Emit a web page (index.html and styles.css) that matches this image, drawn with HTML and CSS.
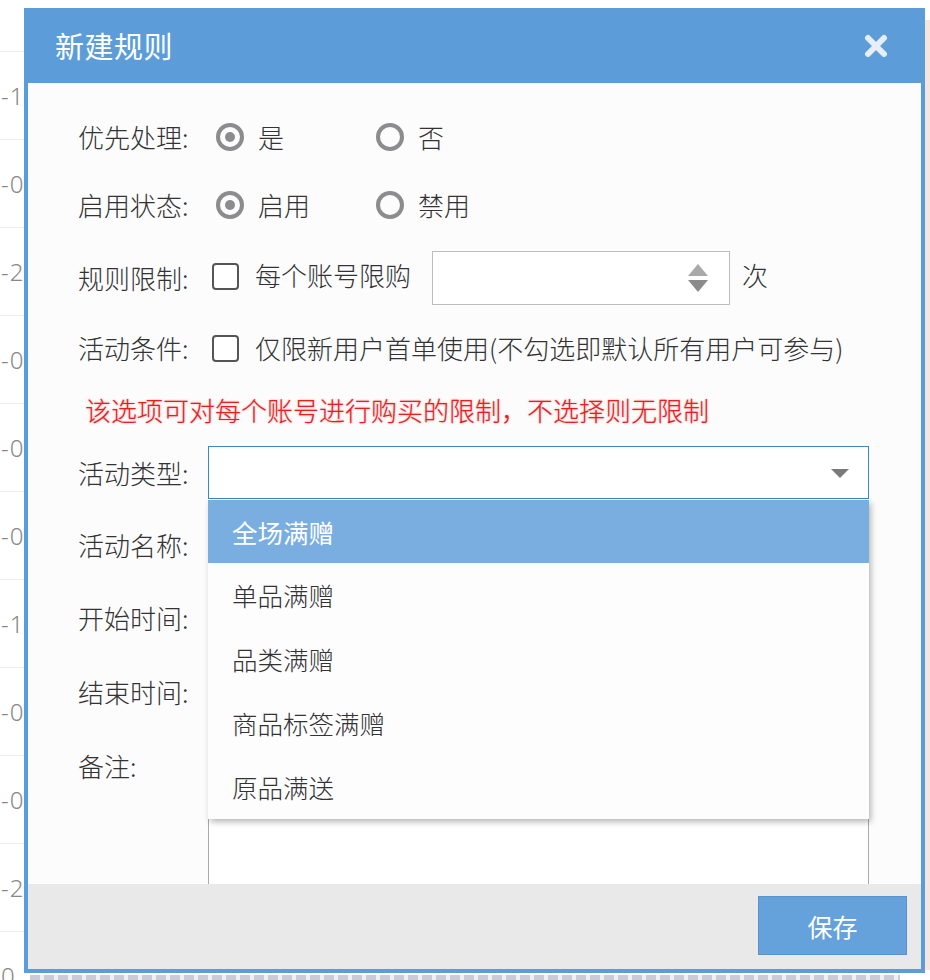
FILE: index.html
```html
<!DOCTYPE html>
<html lang="zh-CN">
<head>
<meta charset="utf-8">
<title>新建规则</title>
<link rel="stylesheet" href="styles.css">
</head>
<body>
<div class="page">
  <div class="bg-table">
    <div class="bg-top"></div>
    <div class="bg-row">-1</div>
    <div class="bg-row">-0</div>
    <div class="bg-row">-2</div>
    <div class="bg-row">-0</div>
    <div class="bg-row">-0</div>
    <div class="bg-row">-0</div>
    <div class="bg-row">-1</div>
    <div class="bg-row">-0</div>
    <div class="bg-row">-0</div>
    <div class="bg-row">-2</div>
    <div class="bg-row">0</div>
  </div>
  <div class="bg-right"></div>
  <div class="bg-bottom"></div>

  <div class="modal">
    <div class="modal-header">
      <span class="modal-title">新建规则</span>
      <svg class="close-icon" width="24" height="24" viewBox="0 0 24 24">
        <path d="M4 4 L20 20 M20 4 L4 20" stroke="#e6eef9" stroke-width="6" stroke-linecap="round" fill="none"/>
      </svg>
    </div>
    <div class="modal-body">
      <div class="row r1">
        <span class="label">优先处理:</span>
        <label class="opt"><span class="radio checked"></span><span>是</span></label>
        <label class="opt"><span class="radio"></span><span>否</span></label>
      </div>
      <div class="row r2">
        <span class="label">启用状态:</span>
        <label class="opt"><span class="radio checked"></span><span>启用</span></label>
        <label class="opt"><span class="radio"></span><span>禁用</span></label>
      </div>
      <div class="row r3">
        <span class="label">规则限制:</span>
        <span class="checkbox"></span>
        <span class="cb-text">每个账号限购</span>
        <div class="num-input">
          <div class="spinner">
            <span class="tri-up"></span>
            <span class="tri-down"></span>
          </div>
        </div>
        <span class="unit">次</span>
      </div>
      <div class="row r4">
        <span class="label">活动条件:</span>
        <span class="checkbox"></span>
        <span class="cb-text">仅限新用户首单使用(不勾选即默认所有用户可参与)</span>
      </div>
      <div class="hint">该选项可对每个账号进行购买的限制，不选择则无限制</div>
      <div class="row r5">
        <span class="label">活动类型:</span>
        <div class="select-wrap">
          <div class="select"><span class="sel-arrow"></span></div>
          <ul class="dropdown">
            <li class="active">全场满赠</li>
            <li>单品满赠</li>
            <li>品类满赠</li>
            <li>商品标签满赠</li>
            <li>原品满送</li>
          </ul>
        </div>
      </div>
      <div class="row r6">
        <span class="label">活动名称:</span>
        <div class="field"></div>
      </div>
      <div class="row r7">
        <span class="label">开始时间:</span>
        <div class="field"></div>
      </div>
      <div class="row r8">
        <span class="label">结束时间:</span>
        <div class="field"></div>
      </div>
      <div class="row r9">
        <span class="label">备注:</span>
        <div class="textarea"></div>
      </div>
    </div>
    <div class="modal-footer">
      <button class="save-btn">保存</button>
    </div>
  </div>
</div>
</body>
</html>
```
FILE: styles.css
```css
html, body {
  margin: 0;
  padding: 0;
}
body {
  background: #ffffff;
  font-family: "Noto Sans CJK SC", "Noto Sans", sans-serif;
  color: #333;
}
.page {
  position: relative;
  width: 930px;
  height: 980px;
  overflow: hidden;
  background: #fff;
}

/* background page fragments */
.bg-table {
  width: 30px;
  display: flex;
  flex-direction: column;
}
.bg-top {
  height: 52px;
  flex: none;
  border-bottom: 1px solid #ececec;
  box-sizing: border-box;
}
.bg-row {
  height: 88px;
  flex: none;
  box-sizing: border-box;
  border-bottom: 1px solid #ececec;
  display: flex;
  align-items: center;
  font-family: "Noto Sans", sans-serif;
  font-weight: 300;
  font-size: 24px;
  color: #888;
  padding-left: 1px;
  letter-spacing: 1px;
}
.bg-right {
  position: absolute;
  left: 925px;
  top: 20px;
  width: 5px;
  height: 950px;
  background: #f6e6df;
}
.bg-bottom {
  position: absolute;
  left: 30px;
  top: 975px;
  width: 870px;
  height: 5px;
  background: repeating-linear-gradient(90deg, #c9ccd6 0 10px, #eef0f4 10px 14px);
}

/* modal */
.modal {
  position: absolute;
  left: 24px;
  top: 8px;
  width: 901px;
  background: #5a9ddc;
  padding: 0 4px 4px 4px;
  box-sizing: border-box;
  display: flex;
  flex-direction: column;
}
.modal-header {
  height: 75px;
  flex: none;
  margin: 0 -4px;
  background: #5c9dd9;
  display: flex;
  align-items: center;
  justify-content: space-between;
  padding: 0 37px 0 31px;
  box-sizing: border-box;
}
.modal-title {
  color: #fff;
  font-size: 29px;
  line-height: 1;
  letter-spacing: 0.5px;
}
.close-icon {
  display: block;
  margin-top: 1px;
}
.modal-body {
  height: 801px;
  flex: none;
  background: #fcfcfd;
  overflow: hidden;
  padding: 29px 0 0 50px;
  box-sizing: border-box;
  display: flex;
  flex-direction: column;
}
.modal-body > * {
  flex: none;
}
.row {
  display: flex;
  align-items: center;
  font-size: 26px;
  font-weight: 300;
  line-height: 1;
  color: #333;
}
.label {
  width: 130px;
  flex: none;
}
.r1 { height: 50px; }
.r2 { height: 50px; margin-top: 18px; }
.r3 { height: 54px; margin-top: 21px; }
.r4 { height: 50px; margin-top: 18px; }
.r5 { height: 53px; margin-top: 21px; }
.r6 { height: 50px; margin-top: 21px; }
.r7 { height: 50px; margin-top: 23px; }
.r8 { height: 50px; margin-top: 24px; }
.r9 { margin-top: 24px; align-items: flex-start; }
.r9 .label { line-height: 50px; }

.opt {
  display: flex;
  align-items: center;
  width: 160px;
  gap: 14px;
}
.r1 .opt:first-of-type, .r2 .opt:first-of-type { margin-left: 8px; }
.radio {
  width: 28px;
  height: 28px;
  box-sizing: border-box;
  border: 4px solid #8c8c8e;
  border-radius: 50%;
  display: flex;
  align-items: center;
  justify-content: center;
  flex: none;
}
.radio.checked::after {
  content: "";
  width: 10px;
  height: 10px;
  border-radius: 50%;
  background: #8c8c8e;
}
.checkbox {
  width: 27px;
  height: 27px;
  box-sizing: border-box;
  border: 2px solid #555;
  border-radius: 4px;
  margin-left: 4px;
  flex: none;
  background: #fff;
}
.cb-text {
  margin-left: 16px;
}
.r3 .cb-text, .r3 .unit { margin-top: -6px; }
.r3 .checkbox { margin-top: -4px; }
.num-input {
  width: 298px;
  height: 54px;
  box-sizing: border-box;
  border: 1px solid #bdbdbd;
  margin-left: 21px;
  background: #fff;
  display: flex;
  align-items: center;
  justify-content: flex-end;
  padding-right: 21px;
}
.spinner {
  display: flex;
  flex-direction: column;
  gap: 4px;
}
.tri-up {
  width: 0;
  height: 0;
  border-left: 10.5px solid transparent;
  border-right: 10.5px solid transparent;
  border-bottom: 12px solid #a9a9a9;
}
.tri-down {
  width: 0;
  height: 0;
  border-left: 10.5px solid transparent;
  border-right: 10.5px solid transparent;
  border-top: 12px solid #8b8b8b;
}
.unit {
  margin-left: 12px;
}
.hint {
  margin-top: 22px;
  height: 30px;
  display: flex;
  align-items: center;
  padding-left: 7px;
  font-size: 26px;
  font-weight: 300;
  line-height: 1;
  color: #e3211d;
  text-shadow: 0 0 2px rgba(240, 40, 40, 0.55);
}

.select-wrap {
  position: relative;
  width: 661px;
  height: 53px;
}
.select {
  height: 53px;
  box-sizing: border-box;
  border: 1px solid #3f86c6;
  background: #fff;
  display: flex;
  align-items: center;
  justify-content: flex-end;
  padding-right: 19px;
}
.sel-arrow {
  width: 0;
  height: 0;
  border-left: 9px solid transparent;
  border-right: 9px solid transparent;
  border-top: 9px solid #7b7b7b;
  margin-top: 2px;
}
.dropdown {
  position: absolute;
  left: 0;
  right: 0;
  top: 54px;
  margin: 0;
  padding: 0;
  list-style: none;
  background: #fdfdfe;
  box-shadow: 2px 3px 6px rgba(0, 0, 0, 0.28);
  z-index: 5;
}
.dropdown li {
  height: 64px;
  display: flex;
  align-items: center;
  padding-left: 24px;
  font-size: 25.5px;
  font-weight: 300;
  color: #333;
}
.dropdown li.active {
  height: 63px;
  background: #7aaee0;
  color: #fff;
  font-weight: 400;
}
.field {
  width: 661px;
  height: 50px;
}
.textarea {
  width: 661px;
  height: 220px;
  box-sizing: border-box;
  border: 1px solid #aaa;
  background: #fff;
}

.modal-footer {
  height: 85px;
  flex: none;
  background: #e9e9ea;
  display: flex;
  justify-content: flex-end;
  align-items: flex-start;
  padding: 12px 14px 0 0;
  box-sizing: border-box;
}
.save-btn {
  width: 149px;
  height: 59px;
  border: 1px solid #5793cf;
  background: #65a1da;
  color: #fff;
  font-family: "Noto Sans CJK SC", "Noto Sans", sans-serif;
  font-size: 25px;
  padding: 0;
  cursor: pointer;
}
```
